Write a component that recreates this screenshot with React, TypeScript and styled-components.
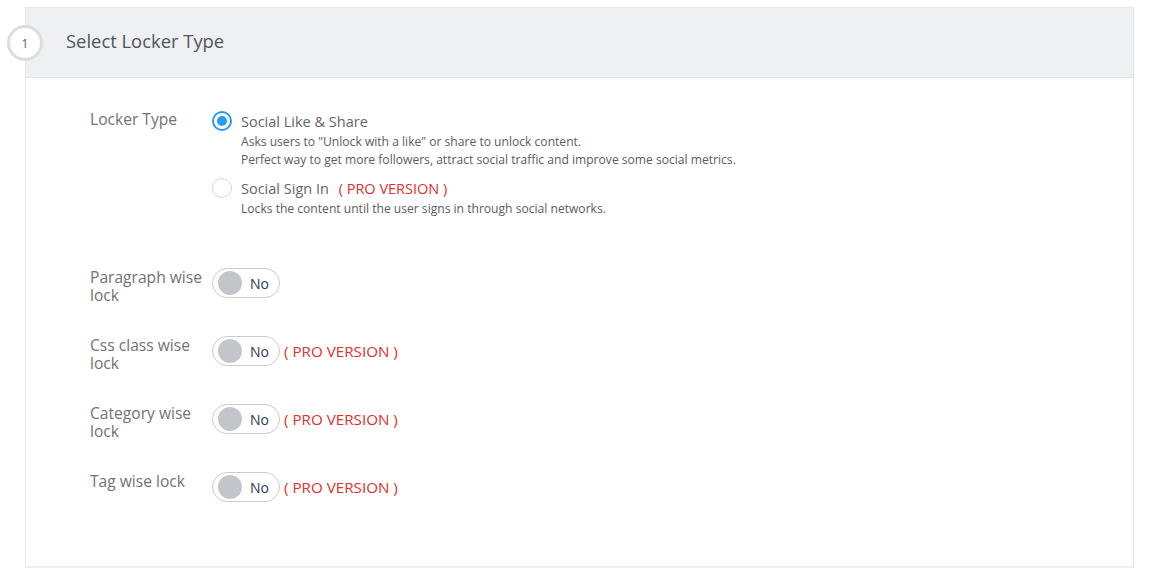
import styled, { createGlobalStyle } from 'styled-components'

const GlobalStyle = createGlobalStyle`
    body {
        margin: 0;
        background: #fff;
        font-family: "Open Sans", "Liberation Sans", Arial, sans-serif;
    }
`

const Page = styled.div`
    padding: 7px 18px 0 25px;
    width: 1152px;
    box-sizing: border-box;
`

const Card = styled.section`
    border: 1px solid #e6e7ea;
    border-bottom-width: 2px;
    border-bottom-color: #eeeeee;
    height: 561px;
    box-sizing: border-box;
`

const Header = styled.header`
    position: relative;
    display: flex;
    align-items: center;
    height: 70px;
    padding-left: 40px;
    background: #eff0f2;
    border-bottom: 1px solid #e3e4e7;
    box-sizing: border-box;
`

const StepBadge = styled.span`
    position: absolute;
    left: -19px;
    top: 17px;
    width: 36px;
    height: 36px;
    border: 3px solid #dcdde3;
    border-radius: 50%;
    background: #fff;
    display: flex;
    align-items: center;
    justify-content: center;
    font-size: 12px;
    color: #6b5a52;
    box-sizing: border-box;
`

const Title = styled.h2`
    margin: -4px 0 0;
    font-size: 18.4px;
    font-weight: 400;
    color: #4e555c;
`

const Body = styled.div`
    padding: 34px 0 0 64px;
    display: flex;
    flex-direction: column;
`

const Row = styled.div<{ $gap: number }>`
    display: grid;
    grid-template-columns: 122px 1fr;
    margin-bottom: ${(p) => p.$gap}px;
`

const Label = styled.div`
    font-size: 15.6px;
    line-height: 18px;
    color: #727272;
    width: 118px;
    margin-top: -3px;
`

const TopLabel = styled(Label)`
    margin-top: -2px;
`

const Options = styled.div`
    display: flex;
    flex-direction: column;
    gap: 10px;
`

const Option = styled.div`
    display: grid;
    grid-template-columns: 29px 1fr;
`

const Radio = styled.span<{ $checked?: boolean }>`
    width: 20px;
    height: 20px;
    border-radius: 50%;
    box-sizing: border-box;
    border: ${(p) => (p.$checked ? '2px solid #2b9af3' : '1px solid #d5d7db')};
    display: flex;
    align-items: center;
    justify-content: center;
    margin-top: -1px;

    &::after {
        content: '';
        display: ${(p) => (p.$checked ? 'block' : 'none')};
        width: 10px;
        height: 10px;
        border-radius: 50%;
        background: #2b9af3;
    }
`

const OptionTitle = styled.div`
    font-size: 14.5px;
    line-height: 20px;
    color: #666;
`

const OptionDesc = styled.div`
    font-size: 12.1px;
    line-height: 18px;
    color: #5c5c5c;
    margin-top: 1px;
`

const Pro = styled.span`
    color: #e0302c;
    font-size: 15.2px;
    margin-left: 4px;
`

const InlinePro = styled(Pro)`
    font-size: 14.5px;
    margin-left: 6px;
`

const Control = styled.div`
    display: flex;
    align-items: center;
    height: 30px;
    margin-top: -3px;
`

const Toggle = styled.span`
    display: flex;
    align-items: center;
    width: 68px;
    height: 30px;
    border: 1px solid #c9cbcf;
    border-radius: 15px;
    box-sizing: border-box;
    padding-left: 5px;
    gap: 8px;
    font-size: 14px;
    color: #2d3a4a;

    &::before {
        content: '';
        width: 24px;
        height: 24px;
        border-radius: 50%;
        background: #c4c6cb;
    }
`

const toggles = [
    { label: 'Paragraph wise lock', pro: false },
    { label: 'Css class wise lock', pro: true },
    { label: 'Category wise lock', pro: true },
    { label: 'Tag wise lock', pro: true },
]

const App = () => {
    return (
        <Page>
            <GlobalStyle />
            <Card>
                <Header>
                    <StepBadge>1</StepBadge>
                    <Title>Select Locker Type</Title>
                </Header>
                <Body>
                    <Row $gap={53}>
                        <TopLabel>Locker Type</TopLabel>
                        <Options>
                            <Option>
                                <Radio $checked />
                                <div>
                                    <OptionTitle>Social Like &amp; Share</OptionTitle>
                                    <OptionDesc>
                                        Asks users to "Unlock with a like" or share to unlock content.
                                        <br />
                                        Perfect way to get more followers, attract social traffic and improve some social metrics.
                                    </OptionDesc>
                                </div>
                            </Option>
                            <Option>
                                <Radio />
                                <div>
                                    <OptionTitle>
                                        Social Sign In <InlinePro>( PRO VERSION )</InlinePro>
                                    </OptionTitle>
                                    <OptionDesc>Locks the content until the user signs in through social networks.</OptionDesc>
                                </div>
                            </Option>
                        </Options>
                    </Row>
                    {toggles.map((t) => (
                        <Row key={t.label} $gap={35}>
                            <Label>{t.label}</Label>
                            <Control>
                                <Toggle>No</Toggle>
                                {t.pro && <Pro>( PRO VERSION )</Pro>}
                            </Control>
                        </Row>
                    ))}
                </Body>
            </Card>
        </Page>
    )
}

export default App
